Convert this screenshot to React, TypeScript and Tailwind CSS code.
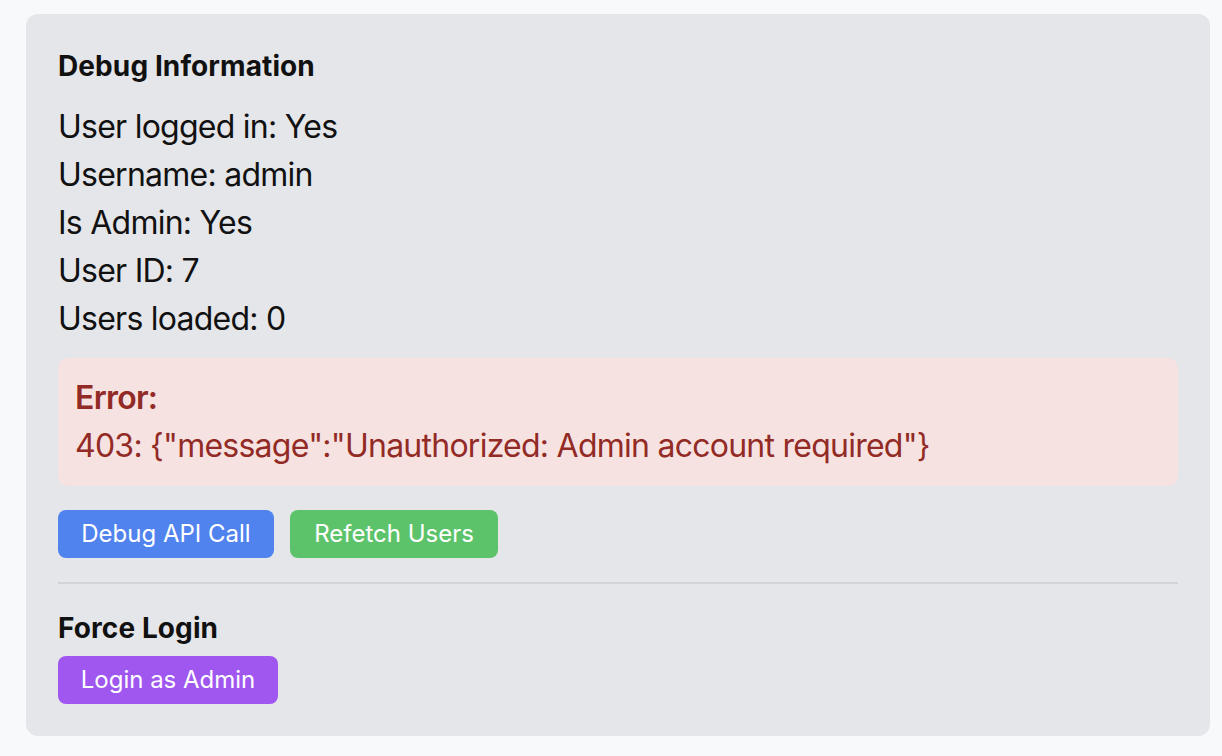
export default function App() {
  const info = [
    "User logged in: Yes",
    "Username: admin",
    "Is Admin: Yes",
    "User ID: 7",
    "Users loaded: 0",
  ];

  return (
    <main
      className="min-h-[756px] w-full bg-[#f8f9fb] pt-[14px] pl-[26px]"
      style={{ fontFamily: "Inter, 'Noto Sans', sans-serif" }}
    >
      <div className="w-[1184px] rounded-[12px] bg-[#e5e6ea] p-[32px] text-[#111]">
        <h2 className="text-[28px] leading-[40px] font-bold tracking-[0.1px] mb-[17px]">
          Debug Information
        </h2>
        <div className="flex flex-col">
          {info.map((line) => (
            <p key={line} className="text-[32px] leading-[48px] tracking-[-0.75px]">
              {line}
            </p>
          ))}
        </div>

        <div className="mt-[15px] rounded-[10px] bg-[#f7e2e2] px-[17px] py-[16px] text-[#922b25] text-[32px] leading-[48px] tracking-[-0.75px]">
          <p className="font-semibold">Error:</p>
          <p>403: {'{"message":"Unauthorized: Admin account required"}'}</p>
        </div>

        <div className="mt-[24px] flex gap-[16px]">
          <button className="h-[48px] w-[216px] rounded-[8px] bg-[#5083ee] text-[24px] text-white">
            Debug API Call
          </button>
          <button className="h-[48px] w-[208px] rounded-[8px] bg-[#5dc36a] text-[24px] text-white">
            Refetch Users
          </button>
        </div>

        <div className="mt-[24px] border-t-2 border-[#d3d4d8]" />

        <h2 className="mt-[24px] text-[28px] leading-[40px] font-bold tracking-[0.1px]">
          Force Login
        </h2>
        <button className="mt-[8px] h-[48px] w-[220px] rounded-[8px] bg-[#a057ef] text-[24px] text-white">
          Login as Admin
        </button>
      </div>
    </main>
  );
}
